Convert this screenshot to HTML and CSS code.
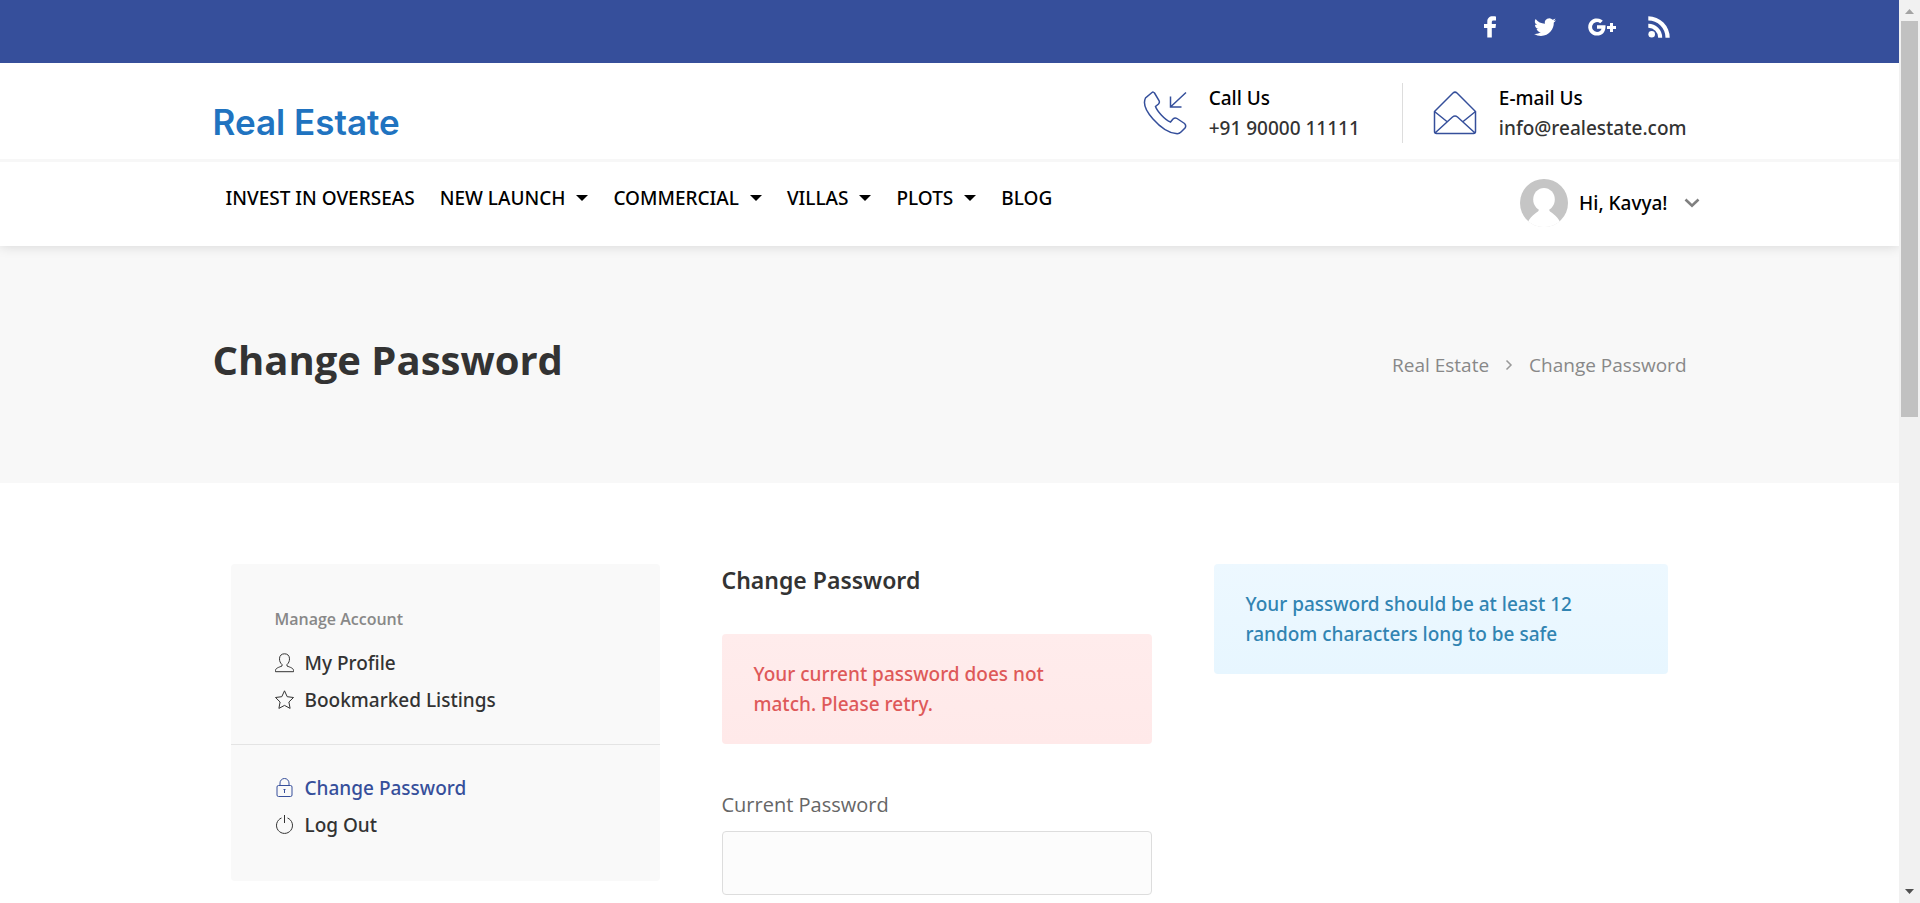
FILE: index.html
```html
<!DOCTYPE html>
<html lang="en">
<head>
<meta charset="utf-8">
<title>Change Password - Real Estate</title>
<link rel="stylesheet" href="styles.css">
</head>
<body>
<header class="header">
  <div class="topbar">
    <div class="container topbar-inner">
      <a href="#" aria-label="Facebook"><svg width="24" height="24" viewBox="0 0 24 24" fill="#fff"><path d="M18 1.500v4h-2.400c-1.300 0-1.800.6-1.800 1.800V9h4.200l-.5 4h-3.700v9.500H9.300V13H6V9h3.300V6.700C9.300 3.200 11.400 1.300 14.600 1.300c1.500 0 2.800.1 3.400.2z"/></svg></a>
      <a href="#" aria-label="Twitter"><svg width="24" height="24" viewBox="0 0 24 24" fill="#fff"><path d="M23 5.300c-.8.400-1.600.6-2.500.7.900-.5 1.600-1.400 1.900-2.400-.8.500-1.800.9-2.800 1.100A4.500 4.500 0 0 0 11.900 8.700 12.700 12.700 0 0 1 2.600 4a4.500 4.500 0 0 0 1.400 6c-.7 0-1.400-.2-2-.6a4.500 4.500 0 0 0 3.600 4.500c-.7.200-1.400.2-2 .1a4.500 4.500 0 0 0 4.200 3.100A9 9 0 0 1 1.100 19 12.700 12.700 0 0 0 8 21c8.300 0 13-7 12.800-13.400.9-.6 1.600-1.400 2.200-2.300z"/></svg></a>
      <a href="#" aria-label="Google Plus"><svg width="28" height="24" viewBox="0 0 28 24" fill="#fff"><path d="M9 10.200v3.500h4.500c-.4 1.900-2 3.200-4.500 3.200a4.900 4.900 0 1 1 3.200-8.600l2.600-2.500A8.600 8.600 0 1 0 9 20.600c5.500 0 8.900-3.900 8.500-10.400zM22 8h3v3h3v3h-3v3h-3v-3h-3v-3h3z"/></svg></a>
      <a href="#" aria-label="RSS"><svg width="24" height="24" viewBox="0 0 24 24" fill="#fff"><circle cx="4.700" cy="19.300" r="3.300"/><path d="M1.300 8.800v4a9.800 9.800 0 0 1 9.900 9.900h4A13.900 13.900 0 0 0 1.300 8.800zM1.300 1.300v4.200a17.200 17.200 0 0 1 17.200 17.200h4.200A21.400 21.400 0 0 0 1.300 1.300z"/></svg></a>
    </div>
  </div>
  <div class="brandbar">
    <div class="container brand-inner">
      <a class="logo" href="#">Real Estate</a>
      <ul class="contacts">
        <li>
          <svg width="44" height="44" viewBox="0 0 44 44" fill="none" stroke="#354f9b" stroke-width="1.500"><path d="M9 1.500 2.500 7C0 12 2 19 10 28s16 14 23 14.500c2 .4 4-.5 5-1.500l4-4c1-1.500 1-3-.5-4.500l-7.500-5c-1.500-1-3-.5-4 .5L27.500 31C22 29 14 20 12.500 15.500l3-2.500c1-1 1.200-2 .5-3.500L11.500 2c-.7-1-1.700-1.200-2.500-.5zM43 1.500 28 15.500M27.500 5.500V16h11"/></svg>
          <div><strong>Call Us</strong><span>+91 90000 11111</span></div>
        </li>
        <li>
          <svg width="44" height="44" viewBox="0 0 44 44" fill="none" stroke="#354f9b" stroke-width="1.500"><path d="M1.500 20.500v20c0 1.500.5 2 2 2h37c1.500 0 2-.5 2-2v-20L24 2c-1.500-1.300-2.500-1.300-4 0zl13 10.500M42.500 20.500l-13 10.500M2 42l17.500-16c2-1.600 3-1.600 5 0L42 42"/></svg>
          <div><strong>E-mail Us</strong><span>info@realestate.com</span></div>
        </li>
      </ul>
    </div>
  </div>
  <div class="container menu">
    <nav class="nav">
      <a href="#">INVEST IN OVERSEAS</a>
      <a class="has-sub" href="#">NEW LAUNCH</a>
      <a class="has-sub" href="#">COMMERCIAL</a>
      <a class="has-sub" href="#">VILLAS</a>
      <a class="has-sub" href="#">PLOTS</a>
      <a href="#">BLOG</a>
    </nav>
    <button class="user" type="button">
      <svg width="48" height="48" viewBox="0 0 48 48"><defs><clipPath id="round"><circle cx="24" cy="24" r="24"/></clipPath></defs><g clip-path="url(#round)"><path fill="#c5c5c5" d="M0 0h48v48H0z"/><ellipse cx="24" cy="20.500" rx="10.800" ry="11.500" fill="#fff"/><path fill="#fff" d="M6 48c2-8 7-12 12-15.500L20 29h8l2 3.500C35 36 40 40 42 48z"/><path fill="#fff" d="M0 42h48v6H0z"/></g></svg>
      <span>Hi, Kavya!</span>
      <svg width="16" height="10" viewBox="0 0 16 10" fill="none" stroke="#808080" stroke-width="2.600"><path d="m1.500 1.500 6.500 6.300 6.500-6.300"/></svg>
    </button>
  </div>
</header>

<section class="titlebar">
  <div class="container title-inner">
    <h1>Change Password</h1>
    <nav class="crumbs" aria-label="Breadcrumb">
      <a href="#">Real Estate</a>
      <svg width="8" height="12" viewBox="0 0 8 12" fill="none" stroke="#999" stroke-width="1.500"><path d="m1.500 1.500 4.500 4.500-4.500 4.500"/></svg>
      <span>Change Password</span>
    </nav>
  </div>
</section>

<main class="container columns">
  <aside class="account">
    <div class="group">
      <h2>Manage Account</h2>
      <a href="#"><svg width="20" height="20" viewBox="0 0 20 20"><path d="M7 13v-1.500C5.200 10 4.500 8 4.500 5.800 4.500 2.500 6.600.8 9.500.8s5 1.700 5 5c0 2.200-.7 4.200-2.500 5.700V13c3 1.300 6.500 2 6.500 4.500v1.200H.5v-1.200C.5 15 4 14.300 7 13z"/></svg>My Profile</a>
      <a href="#"><svg width="20" height="20" viewBox="0 0 20 20"><path d="m9.500.8 2.700 5.900 6.300.8-4.600 4.500 1.200 6.400-5.600-3-5.600 3L5.100 12 .5 7.500l6.300-.8z"/></svg>Bookmarked Listings</a>
    </div>
    <div class="group">
      <a class="current" href="#"><svg width="20" height="20" viewBox="0 0 20 20"><rect x="2" y="7.500" width="15" height="11" rx="1.500"/><path d="M5 7.500V5a4.500 4.500 0 0 1 9 0v2.500M9.500 11v4M8.500 11.500h2"/></svg>Change Password</a>
      <a href="#"><svg width="20" height="20" viewBox="0 0 20 20"><path d="M6.500 3a8 8 0 1 0 6 0M9.500 0v8"/></svg>Log Out</a>
    </div>
  </aside>
  <form class="password">
    <h2>Change Password</h2>
    <p class="notice error">Your current password does not match. Please retry.</p>
    <label for="current">Current Password</label>
    <input id="current" type="password">
  </form>
  <p class="notice info">Your password should be at least 12 random characters long to be safe</p>
</main>

<div class="scrollbar" aria-hidden="true">
  <svg width="21" height="21" viewBox="0 0 21 21"><path fill="#a3a3a3" d="m6 14 4.500-5 4.500 5z"/></svg>
  <div class="track"><div class="thumb"></div></div>
  <svg width="21" height="21" viewBox="0 0 21 21"><path fill="#505050" d="m6 7 4.500 5L15 7z"/></svg>
</div>
</body>
</html>
```
FILE: styles.css
```css
* { box-sizing: border-box; }

body {
  margin: 0;
  padding-right: 21px;
  background: #fff;
  color: #333;
  font: 500 19px/30px "Noto Sans", "Open Sans", sans-serif;
}

a { color: inherit; text-decoration: none; }
h1, h2, p, ul { margin: 0; padding: 0; }
svg { display: block; flex: none; }

.container { max-width: 1474px; margin: 0 auto; }

.header {
  position: relative;
  background: #fff;
  box-shadow: 0 0 12px rgba(0, 0, 0, 0.15);
}

.topbar { background: #364f9b; }
.topbar-inner {
  display: flex;
  justify-content: flex-end;
  gap: 31px;
  height: 63px;
  padding: 15px 16px 0 0;
}

.brandbar { border-bottom: 3px solid #f7f7f7; }
.brand-inner {
  display: flex;
  justify-content: space-between;
  height: 99px;
  padding-top: 20px;
  margin-bottom: -3px;
}
.logo {
  margin-top: 15px;
  color: #2073c0;
  font: 600 35px/48px Inter, sans-serif;
}

.contacts { display: flex; list-style: none; }
.contacts li { display: flex; gap: 22px; height: 60px; }
.contacts li + li {
  margin-left: 42px;
  padding-left: 30px;
  border-left: 1px solid #ddd;
}
.contacts svg { margin-top: 8px; }
.contacts strong, .contacts span { display: block; }
.contacts strong { color: #000; font-weight: 500; }

.menu {
  display: flex;
  justify-content: space-between;
  height: 84px;
  color: #000;
}
.nav { display: flex; gap: 25px; padding: 20px 0 0 13px; }
.nav a { display: flex; align-items: center; height: 32px; }
.has-sub::after {
  content: "";
  margin-left: 11px;
  border: 6px solid transparent;
  border-top-color: #000;
  border-bottom: 0;
}
.user {
  display: flex;
  align-items: center;
  height: 48px;
  margin: 17px -13px 0 0;
  padding: 0;
  border: 0;
  background: none;
  color: #000;
  font: inherit;
}
.user span { margin: 0 16px 0 11px; }

.titlebar { background: #f8f8f8; }
.title-inner {
  display: flex;
  justify-content: space-between;
  align-items: center;
  height: 237px;
}
h1, .account h2, .crumbs, label { font-family: "Open Sans", sans-serif; }
h1 { color: #333; font-size: 40px; line-height: 50px; font-weight: 700; margin-bottom: 10px; }
.crumbs { display: flex; align-items: center; gap: 16px; color: #888; font-weight: 400; }

.columns {
  display: grid;
  grid-template-columns: 429fr 430fr 454fr;
  gap: 62px;
  align-items: start;
  padding: 81px 19px 60px 18px;
}

.account { border-radius: 4px; background: #f9f9f9; }
.group { padding: 24px 44px 26px; }
.group:first-child { padding-top: 39px; }
.group:last-child { padding-bottom: 38px; }
.group + .group { border-top: 1px solid #e4e4e4; }
.group h2 { color: #888; font-size: 16px; line-height: 32px; font-weight: 600; margin-bottom: 9px; }
.group a { display: flex; align-items: center; gap: 10px; height: 37px; }
.group svg { fill: none; stroke: currentColor; stroke-width: 1; }
.account .current { color: #364f9b; }

.password { display: flex; flex-direction: column; }
.password h2 { font-size: 23px; line-height: 32px; font-weight: 600; margin-bottom: 38px; }
.notice { padding: 25px 64px 25px 32px; border-radius: 4px; }
.error { color: #de5959; background: linear-gradient(#ffecec, #ffe9e9); }
.info { color: #3184b2; background: linear-gradient(#edf8ff, #e7f6ff); }
.password label { margin: 46px 0 11px; color: #666; font-size: 20px; font-weight: 400; }
.password input {
  width: 100%;
  height: 64px;
  padding: 0 20px;
  border: 1px solid #ddd;
  border-radius: 4px;
  background: #fcfcfc;
  font: inherit;
}

.scrollbar {
  position: fixed;
  top: 0;
  right: 0;
  bottom: 0;
  display: flex;
  flex-direction: column;
  width: 21px;
  background: #f1f1f1;
}
.track { flex: 1; padding: 0 2px; }
.thumb { height: 46%; background: #c1c1c1; }
```
